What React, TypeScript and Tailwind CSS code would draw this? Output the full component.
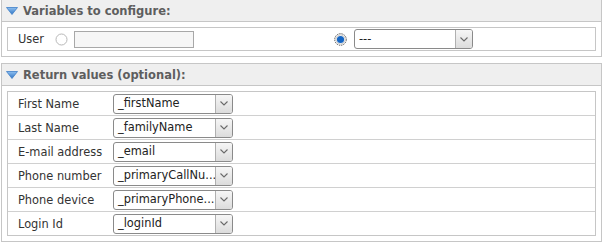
import React from "react";

const font = { fontFamily: '"DejaVu Sans", Verdana, sans-serif' };

function Triangle() {
  return (
    <svg width="12" height="8" viewBox="0 0 12 8" className="shrink-0">
      <defs>
        <linearGradient id="tg" x1="0" y1="0" x2="0" y2="1">
          <stop offset="0" stopColor="#8fc0f0" />
          <stop offset="1" stopColor="#2f74c4" />
        </linearGradient>
      </defs>
      <path d="M0.5 0.5 L11.5 0.5 L6 7.5 Z" fill="url(#tg)" stroke="#3f7fc8" strokeWidth="0.8" strokeLinejoin="round" />
    </svg>
  );
}

function Chevron() {
  return (
    <svg width="8" height="5" viewBox="0 0 8 5">
      <path d="M0.5 0.5 L4 4 L7.5 0.5" fill="none" stroke="#6b6b6b" strokeWidth="1.1" />
    </svg>
  );
}

function Select({ value, width }: { value: string; width: number }) {
  return (
    <div
      className="flex h-[20px] rounded-[3px] border border-[#8a8a8a] bg-white overflow-hidden"
      style={{ width }}
    >
      <div className="flex-1 flex items-center pl-[4px] pt-[1px] text-[11.4px] text-[#222] whitespace-nowrap overflow-hidden">
        {value}
      </div>
      <div className="w-[17px] border-l border-[#b0b0b0] bg-gradient-to-b from-[#f6f6f6] to-[#dcdcdc] flex items-center justify-center">
        <Chevron />
      </div>
    </div>
  );
}

function Radio({ checked }: { checked?: boolean }) {
  return checked ? (
    <svg width="13" height="13" viewBox="0 0 13 13" className="shrink-0">
      <circle cx="6.5" cy="6.5" r="5.8" fill="#fff" stroke="#555" strokeWidth="1" strokeDasharray="1.4 0.9" />
      <circle cx="6.5" cy="6.5" r="4.6" fill="#fff" stroke="#b5b5b5" strokeWidth="0.8" />
      <circle cx="6.5" cy="6.5" r="3.6" fill="#1666c4" />
    </svg>
  ) : (
    <svg width="13" height="13" viewBox="0 0 13 13" className="shrink-0">
      <circle cx="6.5" cy="6.5" r="5.5" fill="#fff" stroke="#b8b8b8" strokeWidth="1" />
    </svg>
  );
}

function Panel({ title, children, first }: { title: string; children: React.ReactNode; first?: boolean }) {
  return (
    <div className={`w-[601px] border border-[#c6c6c6] bg-white ${first ? "-mt-[1px]" : ""}`}>
      <div className="h-[22px] bg-[#efefef] border-b border-[#c6c6c6] flex items-center pl-[4px] gap-[5px]">
        <Triangle />
        <span className="text-[11.5px] font-bold text-[#5e5e5e] leading-none pt-[2px]">{title}</span>
      </div>
      <div className="pt-[5px] pb-[5px] px-[5px]">
        <div className="border border-[#c6c6c6]">{children}</div>
      </div>
    </div>
  );
}

const rows: [string, string][] = [
  ["First Name", "_firstName"],
  ["Last Name", "_familyName"],
  ["E-mail address", "_email"],
  ["Phone number", "_primaryCallNu..."],
  ["Phone device", "_primaryPhone..."],
  ["Login Id", "_loginId"],
];

export default function App() {
  return (
    <div className="w-[605px] h-[248px] bg-white pl-[1px] overflow-hidden" style={font}>
      <Panel title="Variables to configure:" first>
        <div className="h-[22px] flex items-center pl-[10px] text-[11.4px] text-[#333]">
          <span className="w-[37px] pt-[2px]">User</span>
          <Radio />
          <div className="ml-[6px] w-[120px] h-[17px] border border-[#a8a8a8] bg-[#f6f6f6]" />
          <div className="ml-[140px]">
            <Radio checked />
          </div>
          <div className="ml-[7px]">
            <Select value="---" width={119} />
          </div>
        </div>
      </Panel>
      <div className="h-[6px]" />
      <Panel title="Return values (optional):">
        {rows.map(([label, value], i) => (
          <div
            key={label}
            className={`flex items-center pl-[10px] text-[11.4px] text-[#333] ${
              i < rows.length - 1 ? "h-[24px] border-b border-[#d0d0d0]" : "h-[23px]"
            }`}
          >
            <span className="w-[95px] whitespace-nowrap pt-[3px]">{label}</span>
            <Select value={value} width={120} />
          </div>
        ))}
      </Panel>
    </div>
  );
}
